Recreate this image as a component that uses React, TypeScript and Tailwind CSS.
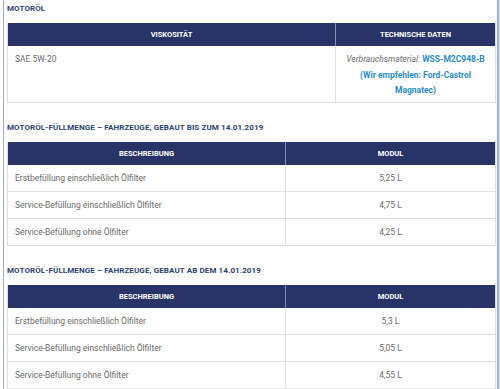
import React from "react";

const font = { fontFamily: "Roboto, 'Noto Sans', Arial, sans-serif" };

function Title({ children }: { children: React.ReactNode }) {
  return (
    <div className="h-[12px] leading-[12px] text-[8px] font-bold text-[#2c4470] tracking-[0.1px] mb-[8px] whitespace-nowrap">
      {children}
    </div>
  );
}

function HeadCell({ children, w }: { children: React.ReactNode; w: string }) {
  return (
    <div
      className={`${w} h-[23px] flex items-center justify-center text-white text-[7.5px] font-bold border-r border-[#8890b0] last:border-r-0`}
    >
      {children}
    </div>
  );
}

function FillTable({ rows }: { rows: [string, string][] }) {
  return (
    <div className="border-x border-[#dedede]">
      <div className="flex bg-[#283368]">
        <HeadCell w="w-[278px]">BESCHREIBUNG</HeadCell>
        <HeadCell w="flex-1">MODUL</HeadCell>
      </div>
      {rows.map(([a, b], i) => (
        <div key={i} className="flex h-[27px] border-b border-[#e2e2e2] text-[8.5px] text-[#6a6a6a]">
          <div className="w-[278px] flex items-center pl-[7px] border-r border-[#e2e2e2]">{a}</div>
          <div className="flex-1 flex items-center justify-center">{b}</div>
        </div>
      ))}
    </div>
  );
}

export default function App() {
  return (
    <div className="w-[500px] h-[389px] overflow-hidden bg-white flex" style={font}>
      <div className="w-[3px] shrink-0" />
      <div className="w-[1px] shrink-0 bg-[#9fadc0]" />
      <div className="w-[3px] shrink-0" />
      <div className="w-[489px] shrink-0 pt-[3px]">
        <Title>MOTORÖL</Title>
        <div className="border-x border-[#dedede]">
          <div className="flex bg-[#283368]">
            <HeadCell w="w-[328px]">VISKOSITÄT</HeadCell>
            <HeadCell w="flex-1">TECHNISCHE DATEN</HeadCell>
          </div>
          <div className="flex h-[57px] border-b border-[#e2e2e2] text-[8.5px] text-[#6a6a6a]">
            <div className="w-[328px] pl-[7px] pt-[6px] leading-[15px] border-r border-[#e2e2e2]">SAE 5W-20</div>
            <div className="flex-1 pt-[6px] px-[4px] leading-[15.5px] text-center">
              <span className="italic">Verbrauchsmaterial:</span>{" "}
              <span className="font-bold text-[#2b8bcb]">WSS-M2C948-B</span>
              <br />
              <span className="font-bold text-[#2b8bcb]">(Wir empfehlen: Ford-Castrol</span>
              <br />
              <span className="font-bold text-[#2b8bcb]">Magnatec)</span>
            </div>
          </div>
        </div>

        <div className="mt-[19px]">
          <Title>MOTORÖL-FÜLLMENGE – FAHRZEUGE, GEBAUT BIS ZUM 14.01.2019</Title>
          <FillTable
            rows={[
              ["Erstbefüllung einschließlich Ölfilter", "5,25 L"],
              ["Service-Befüllung einschließlich Ölfilter", "4,75 L"],
              ["Service-Befüllung ohne Ölfilter", "4,25 L"],
            ]}
          />
        </div>

        <div className="mt-[19px]">
          <Title>MOTORÖL-FÜLLMENGE – FAHRZEUGE, GEBAUT AB DEM 14.01.2019</Title>
          <FillTable
            rows={[
              ["Erstbefüllung einschließlich Ölfilter", "5,3 L"],
              ["Service-Befüllung einschließlich Ölfilter", "5,05 L"],
              ["Service-Befüllung ohne Ölfilter", "4,55 L"],
            ]}
          />
        </div>
      </div>
      <div className="w-[1px] shrink-0 bg-[#eef0f3]" />
      <div className="w-[2px] shrink-0 bg-[#a9b6c6]" />
      <div className="w-[1px] shrink-0 bg-[#d5dce5]" />
    </div>
  );
}
